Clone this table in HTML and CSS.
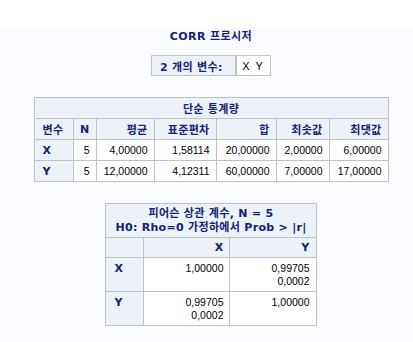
FILE: index.html
```html
<!DOCTYPE html>
<html lang="ko">
<head>
<meta charset="utf-8">
<link rel="stylesheet" href="styles.css">
</head>
<body>
<div class="topband"></div>
<main class="output">
  <div class="proctitle">CORR 프로시저</div>

  <table class="vars">
    <colgroup><col class="vc1"><col class="vc2"></colgroup>
    <tr>
      <th class="vars-head">2 개의 변수:</th>
      <td class="vars-data">X Y</td>
    </tr>
  </table>

  <table class="grid stats">
    <colgroup>
      <col class="s1"><col class="s2"><col class="s3"><col class="s4"><col class="s5"><col class="s6"><col class="s7">
    </colgroup>
    <thead>
      <tr><th colspan="7" class="caption-cell">단순 통계량</th></tr>
      <tr>
        <th class="left">변수</th>
        <th>N</th>
        <th>평균</th>
        <th>표준편차</th>
        <th>합</th>
        <th>최솟값</th>
        <th>최댓값</th>
      </tr>
    </thead>
    <tbody>
      <tr>
        <th class="left">X</th><td>5</td><td>4,00000</td><td>1,58114</td><td>20,00000</td><td>2,00000</td><td>6,00000</td>
      </tr>
      <tr>
        <th class="left">Y</th><td>5</td><td>12,00000</td><td>4,12311</td><td>60,00000</td><td>7,00000</td><td>17,00000</td>
      </tr>
    </tbody>
  </table>

  <table class="grid corr">
    <colgroup><col class="c1"><col class="c2"><col class="c3"></colgroup>
    <thead>
      <tr><th colspan="3" class="caption-cell two-line">피어슨 상관 계수, N = 5<br>H0: Rho=0 가정하에서 Prob &gt; |r|</th></tr>
      <tr class="corr-head">
        <th></th>
        <th>X</th>
        <th>Y</th>
      </tr>
    </thead>
    <tbody>
      <tr>
        <th class="left top">X</th>
        <td class="top">1,00000</td>
        <td class="top">0,99705<br>0,0002</td>
      </tr>
      <tr>
        <th class="left top">Y</th>
        <td class="top">0,99705<br>0,0002</td>
        <td class="top">1,00000</td>
      </tr>
    </tbody>
  </table>
</main>
</body>
</html>
```

FILE: styles.css
```css
html, body {
  margin: 0;
  padding: 0;
  background: #fafbfe;
}
body {
  font-family: "Liberation Sans", "Noto Sans CJK KR", sans-serif;
  font-size: 10.5px;
  color: #000;
  width: 413px;
  height: 342px;
  overflow: hidden;
}
.topband {
  height: 28px;
  background: #ffffff;
}
.output {
  display: flex;
  flex-direction: column;
  align-items: center;
  padding-top: 2px;
  padding-left: 9px;
}
.proctitle {
  font-family: "DejaVu Sans", "Noto Sans CJK KR", sans-serif;
  font-weight: bold;
  font-size: 11px;
  color: #112277;
  line-height: 14px;
  height: 14px;
  letter-spacing: 0.4px;
}

table {
  border-collapse: collapse;
  border-spacing: 0;
  table-layout: fixed;
}
th {
  font-family: "DejaVu Sans", "Noto Sans CJK KR", sans-serif;
  font-size: 11px;
  font-weight: bold;
  color: #112277;
  background: #edf2f9;
  letter-spacing: 0.3px;
}

.vars {
  margin-top: 11px;
  border: 1px solid #c1c1c1;
  width: 119px;
}
.vars .vc1 { width: 84px; }
.vars .vc2 { width: 35px; }
.vars th, .vars td {
  height: 19px;
  padding: 0;
}
.vars-head {
  text-align: left;
  padding-left: 8px !important;
  border-right: 2px solid #c1c1c1;
}
.vars-data {
  background: #ffffff;
  text-align: center;
  font-size: 11px;
  letter-spacing: 1.5px;
}

.grid {
  border: 1px solid #c1c1c1;
}
.grid th, .grid td {
  border: 1px solid #c1c1c1;
  padding: 0 6px;
  text-align: right;
  white-space: nowrap;
  overflow: hidden;
}
.grid td {
  background: #ffffff;
  color: #000;
}
.grid th.left {
  text-align: left;
  padding-left: 8px;
}
.grid th.caption-cell {
  text-align: center;
}

.stats {
  margin-top: 21px;
  width: 355px;
}
.stats tr {
  height: 21px;
}
.stats .s1 { width: 39px; }
.stats .s2 { width: 23px; }
.stats .s3 { width: 58px; }
.stats .s4 { width: 62px; }
.stats .s5 { width: 60px; }
.stats .s6 { width: 53px; }
.stats .s7 { width: 59px; }

.corr {
  margin-top: 21px;
  width: 211px;
}
.corr .c1 { width: 38px; }
.corr .c2 { width: 86px; }
.corr .c3 { width: 86px; }
.corr th.two-line {
  height: 33px;
  line-height: 14px;
  padding: 0 2px;
}
.corr .corr-head {
  height: 20px;
}
.corr tbody tr {
  height: 34px;
}
.corr .top {
  vertical-align: top;
  padding-top: 4px;
  line-height: 13px;
}
```
